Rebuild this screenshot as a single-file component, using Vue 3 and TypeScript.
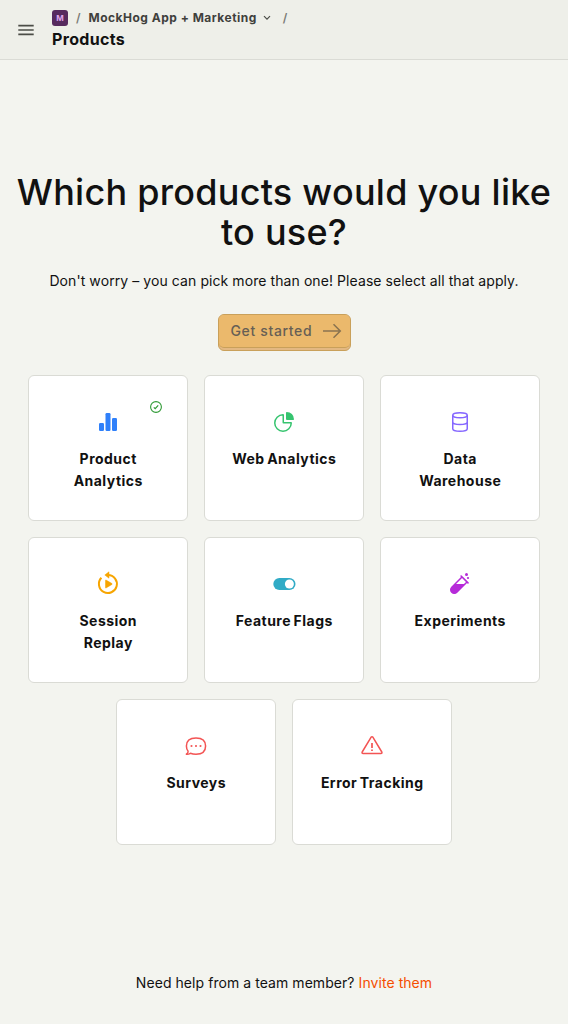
<script setup lang="ts">
import { ref } from 'vue'

interface Product {
  key: string
  name: string
  color: string
}

const products: Product[] = [
  { key: 'product', name: 'Product Analytics', color: '#2f80fa' },
  { key: 'web', name: 'Web Analytics', color: '#36c46f' },
  { key: 'data', name: 'Data Warehouse', color: '#8567ff' },
  { key: 'replay', name: 'Session Replay', color: '#f7a501' },
  { key: 'flags', name: 'Feature Flags', color: '#30abc6' },
  { key: 'experiments', name: 'Experiments', color: '#b62ad9' },
  { key: 'surveys', name: 'Surveys', color: '#f35454' },
  { key: 'errors', name: 'Error Tracking', color: '#f35454' },
]
const completed = ref<string[]>(['product'])
</script>

<template>
  <div class="page">
    <header class="topbar">
      <button class="menu" aria-label="Menu">
        <svg width="16" height="12" viewBox="0 0 16 12" fill="none" stroke="#4b4d47" stroke-width="1.7">
          <path d="M.3 1.6h15.4M.3 6h15.4M.3 10.4h15.4" />
        </svg>
      </button>
      <div class="crumbs">
        <div class="trail">
          <span class="avatar">M</span>
          <span class="slash first">/</span>
          <span class="project">MockHog App + Marketing</span>
          <svg class="chevron" width="8" height="6" viewBox="0 0 8 6" fill="none" stroke="#4b4d47" stroke-width="1.2">
            <path d="M1 1.2l3 3 3-3" />
          </svg>
          <span class="slash">/</span>
        </div>
        <h1>Products</h1>
      </div>
    </header>

    <main>
      <h2>Which products would you like to use?</h2>
      <p class="intro">Don't worry – you can pick more than one! Please select all that apply.</p>
      <button class="start" disabled>
        <span class="face">
          <span>Get started</span>
          <svg width="20" height="16" viewBox="0 0 20 16" fill="none" stroke="currentColor" stroke-width="1.5">
            <path d="M1 8h17M11.5 1.2L18.3 8l-6.8 6.8" />
          </svg>
        </span>
      </button>

      <div class="grid">
        <div v-for="p in products" :key="p.key" class="card">
          <svg v-if="completed.includes(p.key)" class="check" width="12" height="12" viewBox="0 0 12 12" fill="none" stroke="#2f9a35">
            <circle cx="6" cy="6" r="5.4" stroke-width="1.1" />
            <path d="M3.8 6.3l1.4 1.4L8.2 4.4" stroke-width="1.2" />
          </svg>
          <svg class="icon" width="24" height="24" viewBox="0 0 24 24" :style="{ color: p.color }">
            <g v-if="p.key === 'product'" fill="currentColor">
              <rect x="3" y="13" width="5" height="8" rx="1.2" />
              <rect x="9.5" y="3" width="5" height="18" rx="1.2" />
              <rect x="16" y="8" width="5" height="13" rx="1.2" />
            </g>
            <g v-else-if="p.key === 'web'">
              <path d="M11 4.75A8.25 8.25 0 1 0 19.25 13q0-.25-.25-.25h-7.5q-.25 0-.25-.25V5q0-.25-.25-.25z" fill="none" stroke="currentColor" stroke-width="1.5" />
              <path d="M14 2.75q0-.75.75-.75A7.25 7.25 0 0 1 22 9.25q0 .75-.75.75H15q-1 0-1-1z" fill="currentColor" />
            </g>
            <g v-else-if="p.key === 'data'" fill="none" stroke="currentColor" stroke-width="1.5">
              <ellipse cx="12" cy="5.25" rx="7.25" ry="2.5" />
              <path d="M4.75 5.25v13.5c0 1.4 3.25 2.5 7.25 2.5s7.25-1.1 7.25-2.5V5.25M4.75 12c0 1.4 3.25 2.5 7.25 2.5s7.25-1.1 7.25-2.5" />
            </g>
            <g v-else-if="p.key === 'replay'">
              <path d="M5.4 5.8A9 9 0 1 0 12 3h-1.5" fill="none" stroke="currentColor" stroke-width="2" />
              <path d="M8.8 3l4.2-3.2v6.4z" fill="currentColor" stroke="currentColor" stroke-width=".5" />
              <path d="M9.5 8.4v7.2q0 .7.5.4l6-3.6q.5-.4 0-.8L10 8q-.5-.3-.5.4z" fill="currentColor" stroke="currentColor" stroke-width=".5" />
            </g>
            <g v-else-if="p.key === 'flags'">
              <rect x="1.3" y="5.9" width="22.2" height="12.2" rx="6.1" fill="currentColor" />
              <circle cx="17.4" cy="12" r="4.5" fill="#fff" />
            </g>
            <g v-else-if="p.key === 'experiments'">
              <path d="M13.1 4l6.9 6.9" fill="none" stroke="currentColor" stroke-width="1.6" stroke-linecap="round" />
              <path d="M14 5L3.8 15.2a3.5 3.5 0 0 0 5 5L19 10" fill="none" stroke="currentColor" stroke-width="1.5" />
              <path d="M6.8 12.1h9.9l-7.9 8.1a3.5 3.5 0 0 1-5-5z" fill="currentColor" />
              <circle cx="18.5" cy="2.5" r="1.5" fill="currentColor" />
              <circle cx="20" cy="6" r="1.1" fill="currentColor" />
            </g>
            <g v-else-if="p.key === 'surveys'">
              <path d="M2.4 20.2q2 .2 4-.9c1.6.6 3.5.9 5.600.9 6.200 0 9.600-3.100 9.600-8.200S18.200 3.900 12 3.900 2.400 7 2.400 12c0 2.200.6 4 1.700 5.300.3 1-.6 2-1.700 2.900z" fill="none" stroke="currentColor" stroke-width="1.5" stroke-linejoin="round" />
              <g fill="currentColor">
                <circle cx="7.5" cy="12" r="1.05" />
                <circle cx="12" cy="12" r="1.05" />
                <circle cx="16.5" cy="12" r="1.05" />
              </g>
            </g>
            <g v-else fill="none" stroke="currentColor" stroke-width="1.5" stroke-linejoin="round">
              <path d="M11 3.3q1-1.2 2 0L21.8 18q.6 1.5-.9 1.5H3.1q-1.5 0-.9-1.5z" />
              <path d="M12 9v5M12 15.4V17" stroke-width="1.7" />
            </g>
          </svg>
          <h3>{{ p.name }}</h3>
        </div>
      </div>

      <p class="help">Need help from a team member? <a>Invite them</a></p>
    </main>
  </div>
</template>

<style>
body {
  background: #f3f4ef;
}
</style>

<style scoped>
.page {
  box-sizing: border-box;
  min-height: 1024px;
  background: #f3f4ef;
  color: #111;
  font-family: Inter, "Liberation Sans", sans-serif;
  font-size: 14px;
  line-height: 20px;
}
h1, h2, h3, p {
  margin: 0;
}
button {
  margin: 0;
  padding: 0;
  border: 0;
  background: none;
  font: inherit;
}
.topbar {
  box-sizing: border-box;
  height: 60px;
  display: flex;
  align-items: center;
  padding-left: 18px;
  background: #eeefe9;
  border-bottom: 1px solid #dadbd5;
}
.menu {
  display: flex;
  width: 34px;
}
.crumbs {
  padding-top: 1px;
}
.trail {
  display: flex;
  align-items: center;
  height: 18px;
  font-size: 12px;
  font-weight: 700;
  color: #3f403c;
}
.project {
  letter-spacing: 0.49px;
  white-space: nowrap;
}
.avatar {
  width: 16px;
  height: 16px;
  border-radius: 3px;
  background: #572a5f;
  color: #dfa6ec;
  font-size: 8px;
  line-height: 16px;
  text-align: center;
}
.slash {
  color: #7a7b76;
  font-weight: 600;
  margin-left: 12px;
}
.slash.first {
  margin-left: 8px;
  margin-right: 8px;
}
.chevron {
  margin-left: 6px;
}
h1 {
  font-size: 16px;
  line-height: 24px;
  font-weight: 700;
  letter-spacing: 0.33px;
}
main {
  display: flex;
  flex-direction: column;
  align-items: center;
  padding: 112px 8px 0;
}
h2 {
  max-width: 552px;
  font-size: 36px;
  line-height: 40px;
  font-weight: 500;
  letter-spacing: 0.26px;
  text-align: center;
}
.intro {
  margin-top: 19px;
  letter-spacing: 0.08px;
}
.start {
  margin-top: 23px;
  width: 133px;
  height: 37px;
  box-sizing: border-box;
  border: 1px solid #c9a05a;
  border-radius: 6px;
  background: #e3b882;
  overflow: hidden;
}
.face {
  box-sizing: border-box;
  height: 33px;
  margin-bottom: 2px;
  display: flex;
  align-items: center;
  justify-content: space-between;
  padding: 0 8px 0 12px;
  border-bottom: 1px solid #c9a05a;
  border-radius: 0 0 5px 5px;
  background: #ebb96c;
  color: #675f55;
  font-weight: 500;
  letter-spacing: 0.64px;
}
.face svg {
  color: #8a7350;
}
.grid {
  display: flex;
  flex-wrap: wrap;
  justify-content: center;
  gap: 16px;
  width: 512px;
  margin-top: 24px;
}
.card {
  position: relative;
  box-sizing: border-box;
  width: 160px;
  height: 146px;
  padding: 34px 25px 0;
  border: 1px solid #dadbd5;
  border-radius: 6px;
  background: #fff;
  text-align: center;
}
.check {
  position: absolute;
  top: 25px;
  right: 25px;
}
.icon {
  display: block;
  margin: 0 auto;
  overflow: visible;
}
h3 {
  margin-top: 14px;
  padding-left: 0.5px;
  font-size: 14px;
  line-height: 22px;
  font-weight: 700;
  letter-spacing: 0.48px;
  word-spacing: -1.2px;
}
.help {
  margin-top: 128px;
  letter-spacing: 0.06px;
}
.help a {
  color: #f54e00;
}
</style>
